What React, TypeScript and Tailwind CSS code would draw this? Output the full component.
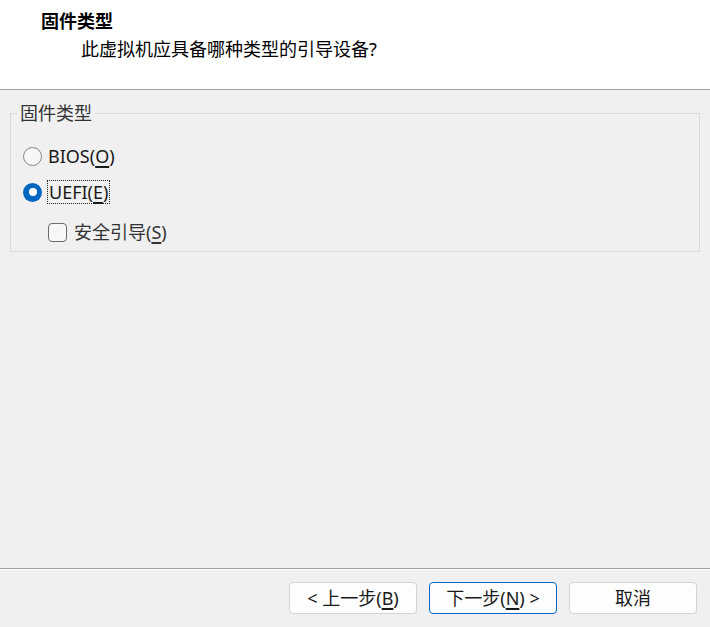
const font = { fontFamily: '"Noto Sans", "Noto Sans CJK SC", sans-serif' }

function Key({ k }: { k: string }) {
  return <span className="underline decoration-[1.5px] underline-offset-[3px]">{k}</span>
}

function Radio({ checked }: { checked?: boolean }) {
  if (checked) {
    return (
      <span className="flex h-[19px] w-[19px] items-center justify-center rounded-full bg-[#0067c0]">
        <span className="h-[8px] w-[8px] rounded-full bg-white" />
      </span>
    )
  }
  return <span className="h-[19px] w-[19px] rounded-full border border-[#878787] bg-[#f7f7f7]" />
}

function Button({ children, primary }: { children: React.ReactNode; primary?: boolean }) {
  return (
    <button
      className={
        primary
          ? 'flex h-[32px] w-[128px] items-center justify-center rounded-[4px] border border-[#0067c0] bg-[#fdfdfd] text-[18px] text-[#1a1a1a]'
          : 'flex h-[32px] w-[128px] items-center justify-center rounded-[4px] border border-[#d3d3d3] bg-[#fdfdfd] text-[18px] text-[#1a1a1a]'
      }
    >
      {children}
    </button>
  )
}

export default function App() {
  return (
    <div className="flex h-[627px] w-[710px] flex-col bg-[#f0f0f0] text-[#1a1a1a]" style={font}>
      <div className="h-[90px] border-b border-[#a0a0a0] bg-white pl-[41px] pt-[8px]">
        <div className="text-[18px] font-bold leading-[26px] text-black">固件类型</div>
        <div className="pl-[40px] pt-[2px] text-[18px] leading-[26px] text-black">此虚拟机应具备哪种类型的引导设备?</div>
      </div>

      <div className="flex-1 px-[10px] pt-[23px]">
        <div className="relative h-[139px] border border-[#d9d9d9]">
          <span className="absolute left-[6px] top-[-12px] bg-[#f0f0f0] px-[3px] text-[18px] leading-[22px] text-[#333]">
            固件类型
          </span>
          <div className="flex flex-col pl-[12px] pt-[32px]">
            <label className="flex h-[20px] items-center gap-[6px] text-[18px]">
              <Radio />
              <span>
                BIOS(<Key k="O" />)
              </span>
            </label>
            <label className="mt-[16px] flex h-[20px] items-center gap-[5px] text-[18px]">
              <Radio checked />
              <span className="border border-dotted border-[#222] px-[1px] leading-[22px]">
                UEFI(<Key k="E" />)
              </span>
            </label>
            <label className="ml-[25px] mt-[20px] flex h-[20px] items-center gap-[7px] text-[18px] text-[#333]">
              <span className="h-[19px] w-[19px] rounded-[4px] border border-[#6b6b6b] bg-[#f7f7f7]" />
              <span>
                安全引导(<Key k="S" />)
              </span>
            </label>
          </div>
        </div>
      </div>

      <div className="h-px bg-[#a0a0a0]" />
      <div className="h-px bg-white" />
      <div className="flex justify-end gap-[12px] pb-[13px] pr-[13px] pt-[12px]">
        <Button>
          &lt; 上一步(<Key k="B" />)
        </Button>
        <Button primary>
          下一步(<Key k="N" />) &gt;
        </Button>
        <Button>取消</Button>
      </div>
    </div>
  )
}
